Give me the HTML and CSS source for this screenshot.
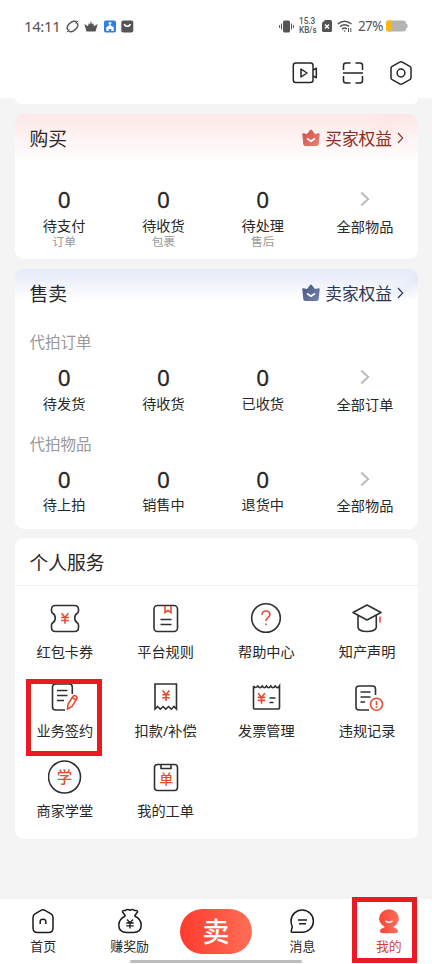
FILE: index.html
```html
<!DOCTYPE html>
<html lang="zh-CN">
<head>
<meta charset="utf-8">
<title>我的</title>
<link rel="stylesheet" href="styles.css">
</head>
<body>
<svg class="defs" aria-hidden="true">
  <defs>
    <linearGradient id="crownRed" x1="0" y1="0" x2="1" y2="1"><stop offset="0" stop-color="#c95146"/><stop offset="1" stop-color="#ec8075"/></linearGradient>
    <linearGradient id="crownBlue" x1="0" y1="0" x2="1" y2="1"><stop offset="0" stop-color="#46557f"/><stop offset="1" stop-color="#7583a9"/></linearGradient>
    <linearGradient id="me" x1="0" y1="0" x2="1" y2="0"><stop offset="0" stop-color="#fa4434"/><stop offset="1" stop-color="#fb705c"/></linearGradient>
    <g id="yen"><path d="M-3.4-5 0-.8 3.4-5M0-.8V5.5M-3.8-.8H3.8M-3.8 2.2H3.8"/></g>
    <path id="crown" d="M.3 5Q.3 4 1.300 4.200L5 5 8.200 1Q9 0 9.800 1L13 5l3.700-.8Q17.700 4 17.700 5L16.700 15.200Q16.500 17 14.800 17H3.200Q1.500 17 1.300 15.200Z"/>
  </defs>
</svg>
<div class="phone">
  <header class="top">
    <div class="status">
      <div class="status-left">
        <span class="time">14:11</span>
        <svg width="13" height="13" viewBox="0 0 13 13" fill="none" stroke="#555" stroke-width="1.400"><path d="M2.500 10C-.3 9 1.500 4.500 5 2.300 7.500.8 10 1 10.500 2.200M10.500 3c2.800 1 1 5.500-2.500 7.700-2.500 1.500-5 1.300-5.500.1"/><path d="M.8 12.200 3.500 9.500M9.500 3.500 12.200.8" stroke-width="1"/></svg>
        <svg width="14" height="13" viewBox="0 0 14 13" fill="#555"><path d="M.3 4 4 6.200 4.800 3 6 4.500 7 .8 8 4.500 9.200 3 10 6.200 13.700 4 11.500 11.500H2.500Z"/></svg>
        <svg width="12" height="13" viewBox="0 0 12 13"><rect y=".5" width="12" height="12" rx="1.800" fill="#347de4"/><path d="M6 2v3M4.500 3.200h3" stroke="#fff" stroke-width="1.200"/><path d="M2.300 11V7.200L6 4.800l3.700 2.400V11H7.300V9H4.700v2Z" fill="#fff"/></svg>
        <svg width="13" height="13" viewBox="0 0 13 13"><rect x=".3" y=".5" width="12" height="12" rx="2" fill="#555"/><path d="M3.300 4C4 7 8.600 7 9.300 4" fill="none" stroke="#fff" stroke-width="1.500"/></svg>
      </div>
      <div class="status-right">
        <svg width="15" height="13" viewBox="0 0 15 13"><rect x="4" y=".5" width="7" height="12" rx="1.500" fill="#555"/><path d="M2.500 3.500v6M.6 5v3M12.500 3.500v6M14.400 5v3" stroke="#555" stroke-width="1"/></svg>
        <span class="speed"><span>15.3</span><span>KB/s</span></span>
        <svg width="10" height="12" viewBox="0 0 10 12"><path d="M3 0H8.500Q10 0 10 1.500V10.500Q10 12 8.500 12H1.500Q0 12 0 10.500V3Z" fill="#555"/><path d="m3 4.500 4 4m0-4-4 4" stroke="#fff" stroke-width="1.400"/></svg>
        <svg width="16" height="13" viewBox="0 0 16 13" fill="none" stroke="#555" stroke-width="1.500"><path d="M.8 4Q7.500-1.500 14.500 4M3 6.800Q7.500 3 12.300 6.500M5 9.200Q7.500 7 10 9"/><path d="M6.300 10.500h2.600L7.600 12Z" fill="#555" stroke="none"/><path d="M11.500 8v4M13.800 8v4" stroke-width="1"/></svg>
        <span class="percent">27%</span>
        <svg width="22" height="12" viewBox="0 0 22 12"><rect y=".5" width="20" height="11" rx="2.500" fill="#b4b4b4"/><path d="M2.500.5H6v11H2.500Q0 11.500 0 9V3Q0 .5 2.500.5Z" fill="#f9b713"/><path d="M20 3.500 21.500 4.500v3L20 8.500Z" fill="#b4b4b4"/></svg>
      </div>
    </div>
    <div class="tools">
      <svg class="video" width="26" height="24" viewBox="0 0 26 24" fill="none" stroke="#262626" stroke-width="1.500"><rect x="1.300" y="2" width="19.700" height="19.500" rx="2.500"/><path d="M9 8v8l6-4ZM21.300 9l3-1.800v9.600l-3-1.800" stroke-linejoin="round"/></svg>
      <svg width="22" height="24" viewBox="0 0 22 24" fill="none" stroke="#262626" stroke-width="1.500"><path d="M1.500 9V4.500q0-2.500 2.500-2.500H8.500M13.500 2H18q2.500 0 2.500 2.500V9M1.500 15v4.500Q1.500 22 4 22H8.500M13.500 22H18q2.500 0 2.500-2.500V15M1 12H21"/></svg>
      <svg width="22" height="24" viewBox="0 0 22 24" fill="none" stroke="#262626" stroke-width="1.500"><path d="M9.700 1.200Q11 .5 12.300 1.200L19.800 5.300Q21 6 21 7.300V16.700Q21 18 19.800 18.700L12.300 22.800Q11 23.500 9.700 22.800L2.200 18.700Q1 18 1 16.700V7.300Q1 6 2.200 5.300Z"/><circle cx="11" cy="12" r="3.900"/></svg>
    </div>
  </header>
  <main>
    <div class="tail"></div>
    <section class="card buy">
      <div class="head">
        <h2>购买</h2>
        <a class="perk"><svg width="18" height="18" viewBox="0 0 18 18"><use href="#crown" fill="url(#crownRed)"/><path d="M5 9.500 9 12.300l4-2.800" fill="none" stroke="#fff" stroke-width="1.700"/></svg><span>买家权益</span><svg class="arrow" width="7" height="12" viewBox="0 0 7 12"><path d="m1 1 4.700 5L1 11"/></svg></a>
      </div>
      <div class="stats">
        <div class="stat"><b>0</b><span>待支付</span><small>订单</small></div>
        <div class="stat"><b>0</b><span>待收货</span><small>包裹</small></div>
        <div class="stat"><b>0</b><span>待处理</span><small>售后</small></div>
        <div class="stat all"><svg width="10" height="16" viewBox="0 0 10 16"><path d="m1.200 1.500 7 6.500-7 6.500"/></svg><span>全部物品</span></div>
      </div>
    </section>
    <section class="card sale">
      <div class="head">
        <h2>售卖</h2>
        <a class="perk"><svg width="18" height="18" viewBox="0 0 18 18"><use href="#crown" fill="url(#crownBlue)"/><path d="M5 9.500 9 12.300l4-2.800" fill="none" stroke="#fff" stroke-width="1.700"/></svg><span>卖家权益</span><svg class="arrow" width="7" height="12" viewBox="0 0 7 12"><path d="m1 1 4.700 5L1 11"/></svg></a>
      </div>
      <h3>代拍订单</h3>
      <div class="stats">
        <div class="stat"><b>0</b><span>待发货</span></div>
        <div class="stat"><b>0</b><span>待收货</span></div>
        <div class="stat"><b>0</b><span>已收货</span></div>
        <div class="stat all"><svg width="10" height="16" viewBox="0 0 10 16"><path d="m1.200 1.500 7 6.500-7 6.500"/></svg><span>全部订单</span></div>
      </div>
      <h3>代拍物品</h3>
      <div class="stats">
        <div class="stat"><b>0</b><span>待上拍</span></div>
        <div class="stat"><b>0</b><span>销售中</span></div>
        <div class="stat"><b>0</b><span>退货中</span></div>
        <div class="stat all"><svg width="10" height="16" viewBox="0 0 10 16"><path d="m1.200 1.500 7 6.500-7 6.500"/></svg><span>全部物品</span></div>
      </div>
    </section>
    <section class="card services">
      <h2>个人服务</h2>
      <div class="grid">
        <div class="item"><svg class="ico" viewBox="0 0 34 34"><path d="M7.500 4.500H26.500Q30.500 4.500 30.500 8.500v1.500q0 1.500-1.300 2.300c-3.300 2-3.300 7.400 0 9.400q1.300.8 1.300 2.300V26.500q0 4-4 4H7.500q-4 0-4-4V24q0-1.500 1.300-2.300c3.300-2 3.300-7.400 0-9.400Q3.500 11.500 3.500 10V8.500q0-4 4-4Z"/><use class="red" href="#yen" x="17" y="17.300"/></svg><span>红包卡券</span></div>
        <div class="item"><svg class="ico" viewBox="0 0 34 34"><rect x="5" y="4.500" width="23.500" height="26" rx="3.500"/><path d="M11.500 18.500h11M11.500 23.500h11"/><path class="red" d="M16 5v6.500l3-2 3 2V5"/></svg><span>平台规则</span></div>
        <div class="item"><svg class="ico" viewBox="0 0 34 34"><circle cx="17" cy="17" r="14.300"/><path class="red" d="M13 14c0-5.300 8-5.300 8-.5 0 3-4 3-4 6.500M17 22.500v1.800"/></svg><span>帮助中心</span></div>
        <div class="item"><svg class="ico" viewBox="0 0 34 34"><path d="m17 4 14 7.500-14 7.500-14-7.500ZM8 14.500v12Q9 30.500 17 30.500t9.300-4v-12" stroke-linejoin="round"/><path class="red" d="M30 15.500v6"/></svg><span>知产声明</span></div>
        <div class="item"><svg class="ico" viewBox="0 0 34 34"><path d="M24.300 14V7q0-3-3-3H7.500q-3 0-3 3V27q0 3 3 3H17M9 10.500H19.500M9 15.500H19.500M9 20.500h7"/><path class="red" d="m19.500 29 .6-5 4.700-7.500q1.500-1.500 3.200-.3t.5 3L24 26.500Zm4.700-11.500 3.700 2.400" stroke-width="1.300"/></svg><span>业务签约</span><i class="mark"></i></div>
        <div class="item"><svg class="ico" viewBox="0 0 34 34"><path d="M6 29V4H27.500V29l-2.500-2.500-2.700 2.700-2.800-2.700-2.700 2.700-2.800-2.700-2.700 2.700L8.500 26.500Z"/><use class="red" href="#yen" x="17" y="15.500"/></svg><span>扣款/补偿</span></div>
        <div class="item"><svg class="ico" viewBox="0 0 34 34"><path d="M4.500 6V28Q4.500 29 5.500 29h24q1 0 1-1V6q-1.800 3.200-4.300 0-2.200 3.500-4.400 0-2.200 3.500-4.300 0-2.200 3.500-4.300 0-2.200 3.500-4.400 0Q6.200 9 4.500 6M20.500 18h6M20.500 22.500h4"/><use class="red" href="#yen" x="12.500" y="18.200"/></svg><span>发票管理</span></div>
        <div class="item"><svg class="ico" viewBox="0 0 34 34"><path d="M25.500 15V9q0-3-3-3H9Q6 6 6 9V27q0 3 3 3H19M10.500 12H20.500M10.500 17H20.500M10.500 22h4.500"/><circle class="red" cx="26.500" cy="24.300" r="6"/><path class="red" d="M26.500 21v4M26.500 26.200v1.500"/></svg><span>违规记录</span></div>
        <div class="item"><svg class="ico" viewBox="0 0 34 34"><circle cx="16.500" cy="17" r="16"/><text x="16.500" y="22.600">学</text></svg><span>商家学堂</span></div>
        <div class="item"><svg class="ico" viewBox="0 0 34 34"><rect x="5.500" y="4.500" width="23" height="26" rx="3"/><path d="M12 4.500v4h10v-4"/><text class="small" x="17.200" y="24">单</text></svg><span>我的工单</span></div>
      </div>
    </section>
  </main>
  <nav>
    <a><svg width="24" height="26" viewBox="0 0 24 26"><path d="M10 2.300q2-1.200 4 0l6 3.500q2 1.200 2 3.700V20q0 4.500-4.500 4.500h-11Q2 24.500 2 20V9.500Q2 7 4 5.800Z"/><path d="M9.200 16v-2.500q0-2.200 2.800-2.200t2.800 2.200V16"/></svg><span>首页</span></a>
    <a><svg width="26" height="26" viewBox="0 0 26 26"><path d="M8.500 8 5.500 4q-.3-2 3-1.500 2-1.800 4.500-.2 2.500-1.600 4.500.2 3.300-.5 3 1.500l-3 4M8.500 8C4.500 9.800 1.800 13 1.800 17q0 7.500 8 7.500h6.400q8 0 8-7.500c0-4-2.700-7.200-6.700-9" stroke-linejoin="round"/><path d="m10 11.500 3 3.300 3-3.300M13 14.800v5.700M9.300 15h7.400M9.300 17.800h7.400" stroke-width="1.300"/></svg><span>赚奖励</span></a>
    <a class="sell"><span>卖</span></a>
    <a><svg width="26" height="26" viewBox="0 0 26 26"><path d="M3.500 24.300Q2 24.300 2.300 22.800L3.300 18.500Q2 16 2 13A11.200 11.200 0 1 1 13.200 24.300Z" stroke-linejoin="round"/><path d="M9 12h9M10 15.700h7"/></svg><span>消息</span></a>
    <a class="active"><svg width="24" height="26" viewBox="0 0 24 26"><ellipse cx="12" cy="10.500" rx="9.900" ry="9.300" fill="url(#me)" stroke="none"/><path d="M8 18h8Q16.500 19.800 18.500 20.300q2.500.7 2.500 2.500 0 2.500-3 2.500H6q-3 0-3-2.500 0-1.800 2.500-2.500Q7.500 19.800 8 18Z" fill="url(#me)" stroke="none"/><path d="M8.500 12.800q3.500 2.800 7 0" stroke="#fff"/></svg><span>我的</span><i class="mark"></i></a>
    <div class="home-bar"></div>
  </nav>
</div>
</body>
</html>
```
FILE: styles.css
```css
* { box-sizing: border-box; margin: 0; padding: 0; }
body {
  width: 432px;
  height: 964px;
  overflow: hidden;
  font-family: "Noto Sans", "Noto Sans CJK SC", sans-serif;
  color: #282828;
  background: #f4f4f4;
}
svg { display: block; flex: none; }
.defs { position: absolute; width: 0; height: 0; }
.phone { height: 964px; display: flex; flex-direction: column; }

.top { height: 98px; background: #fff; padding-top: 16px; }
.status { height: 20px; display: flex; align-items: center; justify-content: space-between; padding: 0 24px; color: #555; }
.status-left { display: flex; align-items: center; gap: 5.500px; }
.time { width: 36px; font-size: 15px; line-height: 20px; letter-spacing: -.4px; }
.status-right { display: flex; align-items: center; gap: 5px; }
.speed { width: 18px; font-family: Roboto, sans-serif; font-size: 8.200px; line-height: 9px; font-weight: 500; display: flex; flex-direction: column; }
.percent { width: 24px; font-size: 13.500px; line-height: 20px; letter-spacing: -.6px; margin-right: -1px; }
.tools { display: flex; justify-content: flex-end; gap: 26px; padding: 25px 20px 0 0; }
.video { margin-right: -2px; }

main { flex: 1; padding: 0 14.500px; }
.tail { height: 6px; background: #fff; border-radius: 0 0 8px 8px; }
.card { background: #fff; border-radius: 9px; overflow: hidden; }
.buy { height: 145px; margin-top: 10px; background: linear-gradient(115deg, transparent 86%, #f9d6d333 90%, transparent 96%) 0 0 / 100% 34px no-repeat, linear-gradient(#fde8e7, #fff 50px); }
.sale { height: 260px; margin-top: 10px; background: linear-gradient(145deg, transparent 90%, #d9def055 94%, transparent) 0 0 / 100% 28px no-repeat, linear-gradient(#e5e9f8, #fff 32px); }
.head { height: 50px; display: flex; align-items: center; justify-content: space-between; padding: 0 13.500px 0 15px; }
h2 { font-size: 18.800px; font-weight: 400; line-height: 28px; }
.perk { display: flex; align-items: center; font-size: 16.700px; line-height: 24px; color: #8b2c24; }
.perk svg { margin-top: -2px; }
.perk span { margin: 0 5px; }
.arrow path { fill: none; stroke: currentColor; stroke-width: 1.100; }
.sale .perk { color: #2b3554; }
.stats { display: grid; grid-template-columns: 99.300px 99.300px 99.300px 1fr; }
.stat { display: flex; flex-direction: column; align-items: center; }
.stat b { height: 28px; font-size: 22.500px; line-height: 28px; font-weight: 400; -webkit-text-stroke: .3px; }
.stat span, .item span { font-size: 14.200px; line-height: 20px; white-space: nowrap; }
.stat span { line-height: 17px; margin-top: 2.500px; }
.stat small { font-size: 11.800px; line-height: 14px; color: #999; margin-top: .5px; }
.all svg { margin: 5px 0 7px; fill: none; stroke: #bdbdbd; stroke-width: 2; }
.stat.all span { margin-top: 3.500px; }
.buy .stats { padding-top: 22px; }
h3 { font-size: 15.500px; font-weight: 400; line-height: 22px; color: #999; padding-left: 15px; }
.sale h3 { margin-top: 12px; }
.sale .stats { padding-top: 11px; height: 67.500px; }
.services { height: 301px; margin-top: 9px; overflow: visible; }
.services h2 { height: 48px; line-height: 51px; padding-left: 15px; border-bottom: 1px solid #f1f1f1; }
.grid { display: grid; grid-template-columns: repeat(4, 1fr); grid-auto-rows: 79.400px; padding-top: 15px; }
.item { position: relative; display: flex; flex-direction: column; align-items: center; }
.ico { width: 34px; height: 34px; fill: none; stroke: #303030; stroke-width: 1.600; }
.ico .red { stroke: #e94b35; stroke-width: 1.600; }
.ico text { fill: #e94b35; stroke: none; font-size: 15.500px; text-anchor: middle; font-weight: 500; }
.ico .small { font-size: 14px; }
.item span { margin-top: 7px; }
.mark { position: absolute; border: 5px solid #e81b23; }
.item .mark { left: 11.500px; top: -1.400px; width: 76px; height: 77px; }

nav { position: relative; height: 65px; background: #fff; display: grid; grid-template-columns: repeat(5, 1fr); }
nav a { position: relative; display: flex; flex-direction: column; align-items: center; padding-top: 9px; }
nav svg { fill: none; stroke: #1c1c1c; stroke-width: 1.500; }
nav a span { font-size: 12.900px; line-height: 18px; margin-top: 3px; }
nav .active { color: #d34535; }
nav .sell { margin: 10px 7px; height: 45px; border-radius: 23px; background: linear-gradient(90deg, #fd3b2d, #ff6e57); padding: 0; color: #fff; justify-content: center; }
nav .sell span { font-size: 27px; line-height: 45px; margin: 0; font-weight: 500; }
nav .mark { left: 6px; top: -2px; width: 65px; height: 66px; }
.home-bar { position: absolute; left: 130px; bottom: 1px; width: 172px; height: 3px; border-radius: 2px; background: #bcbcbc; }
```
